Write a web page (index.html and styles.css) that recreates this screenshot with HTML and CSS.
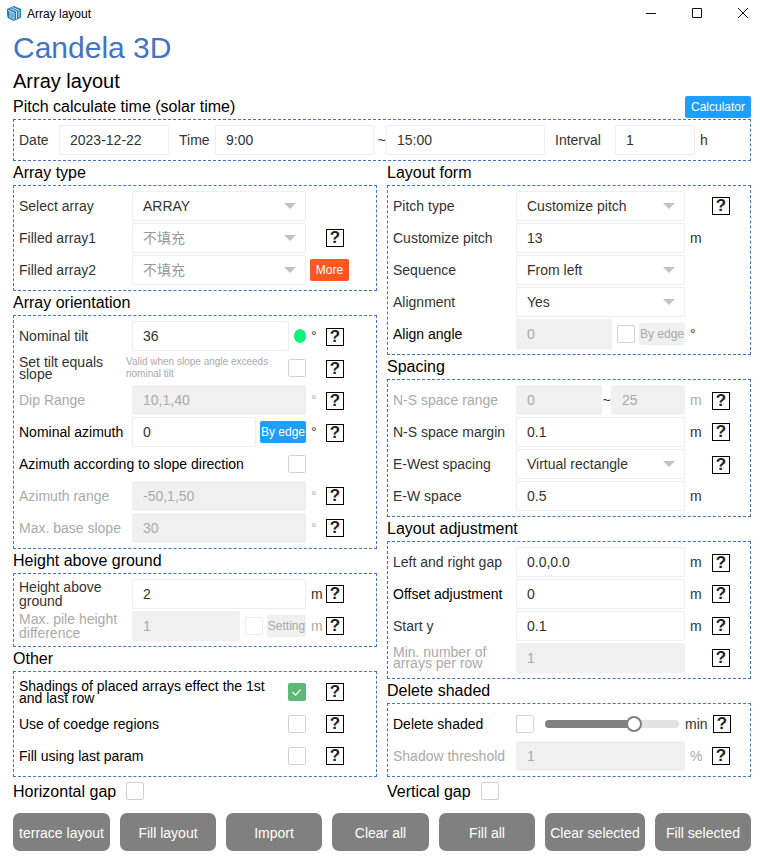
FILE: index.html
```html
<!DOCTYPE html>
<html lang="en">
<head>
<meta charset="utf-8">
<title>Array layout</title>
<link rel="stylesheet" href="styles.css">
</head>
<body>
<header class="titlebar">
  <svg class="app-icon" viewBox="0 0 14 15" width="14" height="15" aria-hidden="true">
    <path class="logo-fill" d="M7 0 14 3v8.500L7 15 1.500 12.500Q0 11 0 8V3z"/>
    <path class="logo-line" d="M1 4.200 7 7v7M3.200 2.600 9.500 5.400v7.600M5.400 1.500 12 4.300v7.200M3 5.500v6.800M5 6.400v6.800"/>
  </svg>
  <span class="window-title">Array layout</span>
  <div class="window-controls">
    <svg viewBox="0 0 10 10" width="10" height="10" aria-hidden="true"><path d="M0 5.500h10"/></svg>
    <svg viewBox="0 0 10 10" width="10" height="10" aria-hidden="true"><path d="M.5.500h9v9h-9z"/></svg>
    <svg viewBox="0 0 10 10" width="10" height="10" aria-hidden="true"><path d="M0 0l10 10M10 0 0 10"/></svg>
  </div>
</header>

<main class="page">
  <h1 class="brand">Candela 3D</h1>
  <h2 class="page-title">Array layout</h2>

  <div class="time-head">
    <h3 class="time-title">Pitch calculate time (solar time)</h3>
    <button class="btn-small blue calc">Calculator</button>
  </div>
  <section class="box">
    <div class="row">
      <span class="t-date">Date</span>
      <div class="field f-date">2023-12-22</div>
      <span class="t-time">Time</span>
      <div class="field f-time">9:00</div>
      <span class="t-tilde">~</span>
      <div class="field f-time">15:00</div>
      <span class="t-interval">Interval</span>
      <div class="field f-interval">1</div>
      <span class="t-h">h</span>
    </div>
  </section>

  <div class="columns">
    <div class="col col-left">
      <h3 class="section-title">Array type</h3>
      <section class="box">
        <div class="row"><span class="label">Select array</span><div class="ctrl"><div class="field select">ARRAY<i class="caret"></i></div></div></div>
        <div class="row"><span class="label">Filled array1</span><div class="ctrl"><div class="field select muted">不填充<i class="caret"></i></div></div><span class="unit"></span><span class="help">?</span></div>
        <div class="row"><span class="label">Filled array2</span><div class="ctrl"><div class="field select muted">不填充<i class="caret"></i></div></div><button class="btn-small orange more">More</button></div>
      </section>

      <h3 class="section-title">Array orientation</h3>
      <section class="box">
        <div class="row"><span class="label">Nominal tilt</span><div class="ctrl"><div class="field">36</div><i class="status-dot"></i></div><span class="unit">°</span><span class="help low">?</span></div>
        <div class="row"><span class="label tight narrow">Set tilt equals slope</span><span class="hint">Valid when slope angle exceeds nominal tilt</span><i class="check"></i><span class="unit"></span><span class="help low">?</span></div>
        <div class="row"><span class="label off">Dip Range</span><div class="ctrl"><div class="field disabled">10,1,40</div></div><span class="unit off">°</span><span class="help low">?</span></div>
        <div class="row"><span class="label dark">Nominal azimuth</span><div class="ctrl"><div class="field">0</div><button class="btn-small blue edge">By edge</button></div><span class="unit">°</span><span class="help low">?</span></div>
        <div class="row"><span class="label dark wide">Azimuth according to slope direction</span><i class="check"></i></div>
        <div class="row"><span class="label off">Azimuth range</span><div class="ctrl"><div class="field disabled">-50,1,50</div></div><span class="unit off">°</span><span class="help">?</span></div>
        <div class="row"><span class="label off">Max. base slope</span><div class="ctrl"><div class="field disabled">30</div></div><span class="unit off">°</span><span class="help">?</span></div>
      </section>

      <h3 class="section-title">Height above ground</h3>
      <section class="box">
        <div class="row"><span class="label">Height above ground</span><div class="ctrl"><div class="field">2</div></div><span class="unit">m</span><span class="help">?</span></div>
        <div class="row"><span class="label off">Max. pile height difference</span><div class="ctrl"><div class="field disabled">1</div><i class="check faint"></i><button class="btn-small grey setting">Setting</button></div><span class="unit off">m</span><span class="help">?</span></div>
      </section>

      <h3 class="section-title">Other</h3>
      <section class="box">
        <div class="row"><span class="label dark wide tight">Shadings of placed arrays effect the 1st and last row</span><i class="check on"><svg viewBox="0 0 18 18" width="16" height="16" aria-hidden="true"><path d="M4 9l3.500 3.500L13 6"/></svg></i><span class="unit"></span><span class="help">?</span></div>
        <div class="row"><span class="label dark wide">Use of coedge regions</span><i class="check"></i><span class="unit"></span><span class="help">?</span></div>
        <div class="row"><span class="label dark wide">Fill using last param</span><i class="check"></i><span class="unit"></span><span class="help">?</span></div>
      </section>

      <div class="flag"><span class="flag-text">Horizontal gap</span><i class="check"></i></div>
    </div>

    <div class="col col-right">
      <h3 class="section-title">Layout form</h3>
      <section class="box">
        <div class="row"><span class="label">Pitch type</span><div class="ctrl"><div class="field select">Customize pitch<i class="caret"></i></div></div><span class="unit"></span><span class="help">?</span></div>
        <div class="row"><span class="label">Customize pitch</span><div class="ctrl"><div class="field">13</div></div><span class="unit">m</span></div>
        <div class="row"><span class="label">Sequence</span><div class="ctrl"><div class="field select">From left<i class="caret"></i></div></div></div>
        <div class="row"><span class="label">Alignment</span><div class="ctrl"><div class="field select">Yes<i class="caret"></i></div></div></div>
        <div class="row"><span class="label dark">Align angle</span><div class="ctrl"><div class="field disabled">0</div><i class="check"></i><button class="btn-small grey edge">By edge</button></div><span class="unit">°</span></div>
      </section>

      <h3 class="section-title">Spacing</h3>
      <section class="box">
        <div class="row"><span class="label off">N-S space range</span><div class="ctrl"><div class="field disabled">0</div><span class="range-sep">~</span><div class="field disabled f-range">25</div></div><span class="unit off">m</span><span class="help low">?</span></div>
        <div class="row"><span class="label">N-S space margin</span><div class="ctrl"><div class="field">0.1</div></div><span class="unit">m</span><span class="help">?</span></div>
        <div class="row"><span class="label">E-West spacing</span><div class="ctrl"><div class="field select">Virtual rectangle<i class="caret"></i></div></div><span class="unit"></span><span class="help low">?</span></div>
        <div class="row"><span class="label">E-W space</span><div class="ctrl"><div class="field">0.5</div></div><span class="unit">m</span></div>
      </section>

      <h3 class="section-title">Layout adjustment</h3>
      <section class="box">
        <div class="row"><span class="label">Left and right gap</span><div class="ctrl"><div class="field">0.0,0.0</div></div><span class="unit">m</span><span class="help low">?</span></div>
        <div class="row"><span class="label dark">Offset adjustment</span><div class="ctrl"><div class="field">0</div></div><span class="unit">m</span><span class="help">?</span></div>
        <div class="row"><span class="label">Start y</span><div class="ctrl"><div class="field">0.1</div></div><span class="unit">m</span><span class="help">?</span></div>
        <div class="row"><span class="label off tighter">Min. number of arrays per row</span><div class="ctrl"><div class="field disabled">1</div></div><span class="unit"></span><span class="help">?</span></div>
      </section>

      <h3 class="section-title">Delete shaded</h3>
      <section class="box">
        <div class="row"><span class="label dark">Delete shaded</span><div class="ctrl"><i class="check"></i><div class="slider"><div class="slider-fill"></div><i class="slider-knob"></i></div></div><span class="unit unit-min">min</span><span class="help">?</span></div>
        <div class="row"><span class="label off">Shadow threshold</span><div class="ctrl"><div class="field disabled">1</div></div><span class="unit off">%</span><span class="help">?</span></div>
      </section>

      <div class="flag"><span class="flag-text">Vertical gap</span><i class="check"></i></div>
    </div>
  </div>

  <div class="actions">
    <button class="action">terrace layout</button>
    <button class="action">Fill layout</button>
    <button class="action">Import</button>
    <button class="action">Clear all</button>
    <button class="action">Fill all</button>
    <button class="action">Clear selected</button>
    <button class="action">Fill selected</button>
  </div>
</main>
</body>
</html>
```

FILE: styles.css
```css
* {
  box-sizing: border-box;
}

html,
body {
  margin: 0;
  padding: 0;
  background: #fff;
}

body {
  width: 760px;
  height: 859px;
  overflow: hidden;
  font-family: "Liberation Sans", "Noto Sans CJK SC", Arial, sans-serif;
  font-size: 14px;
  color: #333;
}

h1,
h2,
h3 {
  margin: 0;
  font-weight: 400;
  color: #000;
}

button {
  margin: 0;
  padding: 0;
  border: 0;
  font-family: inherit;
  color: #fff;
}

i {
  display: block;
  font-style: normal;
}

/* window chrome */
.titlebar {
  display: flex;
  align-items: center;
  height: 30px;
  padding: 0 12px 4px 7px;
}

.app-icon {
  flex: none;
  margin-top: 1px;
}

.logo-fill {
  fill: #1b7fb8;
}

.logo-line {
  fill: none;
  stroke: #fff;
  stroke-width: 0.8;
}

.window-title {
  margin-left: 6px;
  padding-top: 2px;
  font-size: 12px;
  color: #000;
}

.window-controls {
  display: flex;
  gap: 36px;
  margin-left: auto;
}

.window-controls svg {
  display: block;
  fill: none;
  stroke: #111;
  stroke-width: 1;
}

/* page */
.page {
  padding: 0 9px 0 13px;
}

.brand {
  height: 36px;
  font-size: 30px;
  line-height: 36px;
  color: #4472c4;
}

.page-title {
  height: 30px;
  font-size: 20px;
  line-height: 30px;
}

.time-head {
  display: flex;
  justify-content: space-between;
  height: 23px;
}

.time-title {
  font-size: 16px;
  line-height: 21px;
}

.section-title {
  height: 24px;
  font-size: 16px;
  line-height: 23px;
}

.columns {
  display: grid;
  grid-template-columns: 364px 364px;
  column-gap: 10px;
}

.box {
  display: flex;
  flex-direction: column;
  gap: 2px;
  padding: 5px;
  border: 1px dashed #4472c4;
}

.row {
  display: flex;
  align-items: center;
  height: 30px;
}

.label {
  flex: none;
  line-height: 14px;
}

.col-left .label {
  width: 113px;
}

.col-right .label {
  width: 123px;
}

.col-left .label.narrow {
  width: 107px;
}

.col-left .label.wide {
  width: 269px;
}

.label.tight {
  line-height: 12px;
}

.label.tighter {
  line-height: 11px;
}

.dark {
  color: #000;
}

.off {
  color: #aaa;
}

.muted {
  color: #999;
}

.ctrl {
  display: flex;
  flex: none;
  align-items: center;
  height: 30px;
}

.col-left .ctrl {
  width: 174px;
}

.col-right .ctrl {
  width: 169px;
}

.field {
  position: relative;
  flex: 1 1 0;
  min-width: 0;
  height: 30px;
  padding-left: 10px;
  border: 1px solid #eee;
  border-radius: 2px;
  line-height: 28px;
  white-space: nowrap;
}

.field.disabled {
  border-color: #f0f0f0;
  background: #f0f0f0;
  color: #aaa;
}

.caret {
  position: absolute;
  top: 11px;
  right: 9px;
  width: 0;
  height: 0;
  border-top: 6px solid #c2c2c2;
  border-right: 6px solid transparent;
  border-left: 6px solid transparent;
}

.unit {
  flex: none;
  padding-left: 5px;
  line-height: 30px;
}

.col-left .unit {
  width: 20px;
}

.col-right .unit {
  width: 27px;
}

.col-right .unit.unit-min {
  width: 28px;
  padding-left: 0;
}

.help {
  flex: none;
  width: 18px;
  height: 18px;
  border: 1px solid #000;
  font-size: 17px;
  font-weight: 700;
  line-height: 16px;
  text-align: center;
  color: #222;
}

.help.low {
  margin-top: 2px;
}

.check {
  flex: none;
  width: 18px;
  height: 18px;
  border: 1px solid #d2d2d2;
  border-radius: 2px;
  background: #fff;
}

.check.faint {
  margin-left: 5px;
  border-color: #eee;
}

.ctrl > .field + .check {
  margin-left: 5px;
}

.check.on {
  border-color: #5fb878;
  background: #5fb878;
}

.check.on svg {
  display: block;
  fill: none;
  stroke: #fff;
  stroke-width: 1.2;
}

.hint {
  flex: none;
  width: 162px;
  font-size: 10px;
  line-height: 12px;
  color: #aaa;
}

.status-dot {
  flex: none;
  width: 12px;
  height: 14px;
  margin-left: 5px;
  border-radius: 50%;
  background: #0af27a;
}

.btn-small {
  flex: none;
  height: 22px;
  border-radius: 2px;
  font-size: 12px;
  line-height: 22px;
  text-align: center;
}

.blue {
  background: #1e9fff;
}

.orange {
  background: #ff5722;
}

.grey {
  background: #f0f0f0;
  color: #aaa;
}

.calc {
  width: 66px;
}

.more {
  width: 39px;
  margin-left: 4px;
}

.edge {
  width: 46px;
  margin-left: 4px;
  white-space: nowrap;
}

.setting {
  width: 39px;
  margin-left: 4px;
}

.range-sep {
  flex: none;
  width: 9px;
  text-align: center;
}

.f-range {
  flex: 0 0 74px;
}

/* time row */
.t-date {
  flex: none;
  width: 40px;
}

.f-date {
  flex: 0 0 110px;
}

.t-time {
  flex: none;
  width: 36px;
  margin-left: 10px;
}

.f-time {
  flex: 0 0 159px;
}

.t-tilde {
  flex: none;
  width: 12px;
  text-align: right;
}

.t-interval {
  flex: none;
  width: 60px;
  margin-left: 10px;
}

.f-interval {
  flex: 0 0 80px;
}

.t-h {
  margin-left: 5px;
}

/* slider */
.slider {
  position: relative;
  flex: none;
  width: 134px;
  height: 8px;
  margin-left: 11px;
  border-radius: 4px;
  background: #e2e2e2;
}

.slider-fill {
  width: 89px;
  height: 8px;
  border-radius: 4px 0 0 4px;
  background: #808080;
}

.slider-knob {
  position: absolute;
  top: -4px;
  left: 81px;
  width: 16px;
  height: 16px;
  border: 2px solid #808080;
  border-radius: 50%;
  background: #fff;
}

/* bottom */
.flag {
  display: flex;
  gap: 10px;
  align-items: center;
  height: 24px;
  margin-top: 2px;
  font-size: 16px;
  color: #000;
}

.flag-text {
  padding-top: 2px;
}

.actions {
  display: grid;
  grid-template-columns: 97px 96px 96px 97px 96px 100px 96px;
  column-gap: 10px;
  margin-top: 10px;
}

.action {
  height: 38px;
  padding-top: 2px;
  border-radius: 7px;
  background: #808080;
  font-size: 14px;
  white-space: nowrap;
}
```
